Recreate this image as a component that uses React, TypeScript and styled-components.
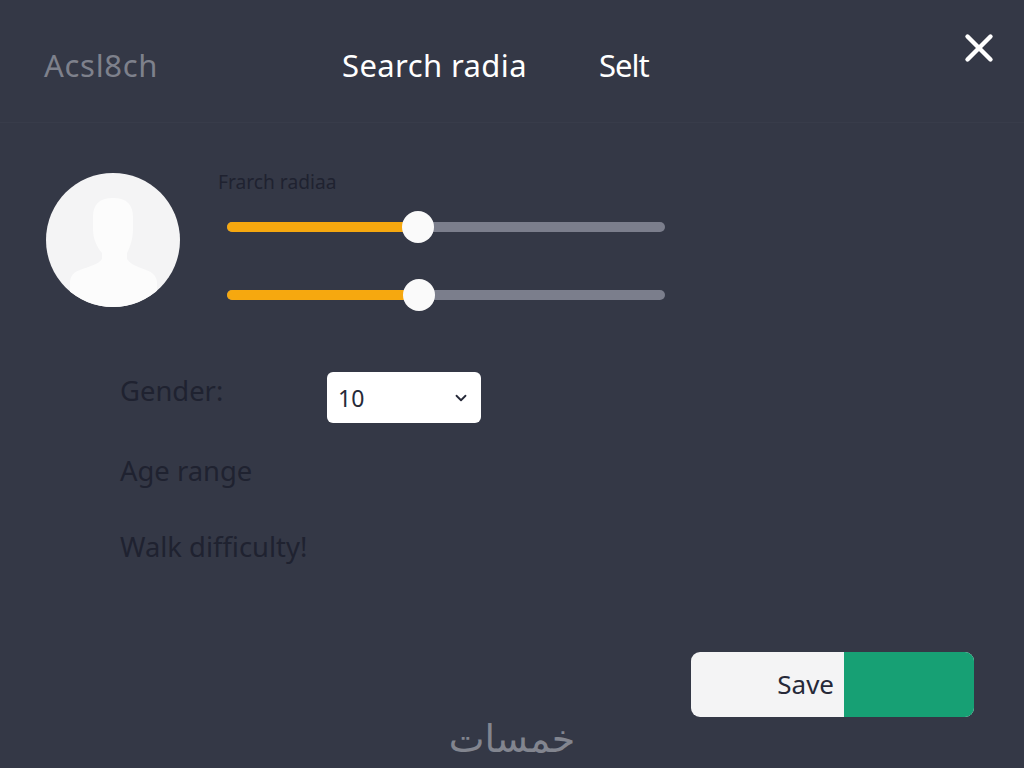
import styled, { createGlobalStyle } from 'styled-components';
import { X, ChevronDown } from 'lucide-react';

const GlobalStyle = createGlobalStyle`
  html, body {
    margin: 0;
    background: #343846;
  }
  * {
    box-sizing: border-box;
  }
`;

const Page = styled.div`
  width: 1024px;
  height: 768px;
  background: #343846;
  font-family: "Noto Sans", "Open Sans", sans-serif;
  display: flex;
  flex-direction: column;
  overflow: hidden;
`;

const Header = styled.header`
  height: 123px;
  flex: none;
  display: flex;
  align-items: center;
  padding: 7px 22px 0 44px;
  border-bottom: 1px solid #383c4a;
`;

const Title = styled.div`
  width: 298px;
  font-size: 31px;
  line-height: 42px;
  letter-spacing: 0.7px;
  color: #7e818c;
`;

const Tab = styled.div<{ $width: number; $spacing: number }>`
  width: ${(p) => p.$width}px;
  font-size: 31px;
  line-height: 42px;
  letter-spacing: ${(p) => p.$spacing}px;
  color: #ffffff;
`;

const CloseButton = styled.button`
  margin-left: auto;
  align-self: flex-start;
  margin-top: 18px;
  width: 46px;
  height: 46px;
  padding: 0;
  border: none;
  background: none;
  color: #ffffff;
`;

const Main = styled.main`
  flex: 1;
  display: flex;
  flex-direction: column;
  padding: 50px 50px 0 46px;
`;

const TopRow = styled.section`
  display: flex;
  gap: 38px;
`;

const Avatar = styled.div`
  width: 134px;
  height: 134px;
  flex: none;
  border-radius: 50%;
  background: #f4f4f5;
  overflow: hidden;
`;

const Sliders = styled.div`
  width: 447px;
  display: flex;
  flex-direction: column;
`;

const SliderLabel = styled.div`
  height: 18px;
  margin-bottom: 31px;
  font-size: 19.2px;
  line-height: 18px;
  color: #1f2230;
`;

const Track = styled.div`
  position: relative;
  height: 10px;
  width: 438px;
  margin-left: 9px;
  margin-bottom: 58px;
  border-radius: 5px;
  background: #7b7e8c;
`;

const Fill = styled.div`
  height: 100%;
  border-radius: 5px 0 0 5px;
  background: #f6a80f;
`;

const Thumb = styled.div`
  position: absolute;
  top: 50%;
  width: 32px;
  height: 32px;
  border-radius: 50%;
  background: #fafafa;
  transform: translate(-50%, -50%);
`;

const Form = styled.section`
  display: flex;
  flex-direction: column;
  padding: 15px 0 0 74px;
`;

const FormRow = styled.div<{ $height: number }>`
  display: flex;
  align-items: flex-start;
  height: ${(p) => p.$height}px;
`;

const FormLabel = styled.div`
  width: 207px;
  font-size: 27.4px;
  line-height: 36px;
  white-space: nowrap;
  color: #1f2230;
`;

const Select = styled.div`
  width: 154px;
  height: 51px;
  margin-top: -1px;
  padding: 0 11px;
  display: flex;
  align-items: center;
  justify-content: space-between;
  border-radius: 6px;
  background: #ffffff;
  font-size: 23px;
  color: #262938;
`;

const Actions = styled.div`
  display: flex;
  justify-content: flex-end;
  margin-top: 63px;
`;

const SaveButton = styled.button`
  width: 283px;
  height: 65px;
  padding: 0;
  display: flex;
  border: none;
  border-radius: 9px;
  overflow: hidden;
  font-family: inherit;
  background: #f4f4f5;
`;

const SaveLabel = styled.span`
  width: 153px;
  height: 100%;
  padding: 0 10px 2px 0;
  display: flex;
  align-items: center;
  justify-content: flex-end;
  font-size: 26px;
  color: #262938;
`;

const SaveFill = styled.span`
  flex: 1;
  background: #17a074;
`;

const Footer = styled.footer`
  height: 51px;
  flex: none;
  display: flex;
  justify-content: center;
`;

const Logo = styled.div`
  font-family: "DejaVu Sans", sans-serif;
  font-size: 38px;
  line-height: 44px;
  color: #82858f;
`;

const AvatarIcon = () => (
  <svg width="134" height="134" viewBox="0 0 134 134">
    <path
      d="M67 25C53 25 47 32 47 44L47 56C47 66 51 74 56 80L56 86C53 91 42 94 34 97C27 99 24 104 24 110L24 134L111 134L111 110C111 104 107 99 100 97C92 94 84 91 81 86L81 80C84 74 87 66 87 56L87 44C87 32 81 25 67 25Z"
      fill="#fcfcfc"
    />
  </svg>
);

const Slider = ({ value }: { value: number }) => (
  <Track>
    <Fill style={{ width: `${value}%` }} />
    <Thumb style={{ left: `${value}%` }} />
  </Track>
);

export default function App() {
  return (
    <Page>
      <GlobalStyle />
      <Header>
        <Title>Acsl8ch</Title>
        <Tab $width={257} $spacing={0.4}>Search radia</Tab>
        <Tab $width={70} $spacing={-1}>Selt</Tab>
        <CloseButton aria-label="Close">
          <X size={46} strokeWidth={2.3} />
        </CloseButton>
      </Header>
      <Main>
        <TopRow>
          <Avatar>
            <AvatarIcon />
          </Avatar>
          <Sliders>
            <SliderLabel>Frarch radiaa</SliderLabel>
            <Slider value={43.5} />
            <Slider value={43.8} />
          </Sliders>
        </TopRow>
        <Form>
          <FormRow $height={80}>
            <FormLabel>Gender:</FormLabel>
            <Select>
              10
              <ChevronDown size={18} strokeWidth={2.4} />
            </Select>
          </FormRow>
          <FormRow $height={76}>
            <FormLabel>Age range</FormLabel>
          </FormRow>
          <FormRow $height={60}>
            <FormLabel>Walk difficulty!</FormLabel>
          </FormRow>
        </Form>
        <Actions>
          <SaveButton>
            <SaveLabel>Save</SaveLabel>
            <SaveFill />
          </SaveButton>
        </Actions>
      </Main>
      <Footer>
        <Logo>خمسات</Logo>
      </Footer>
    </Page>
  );
}
